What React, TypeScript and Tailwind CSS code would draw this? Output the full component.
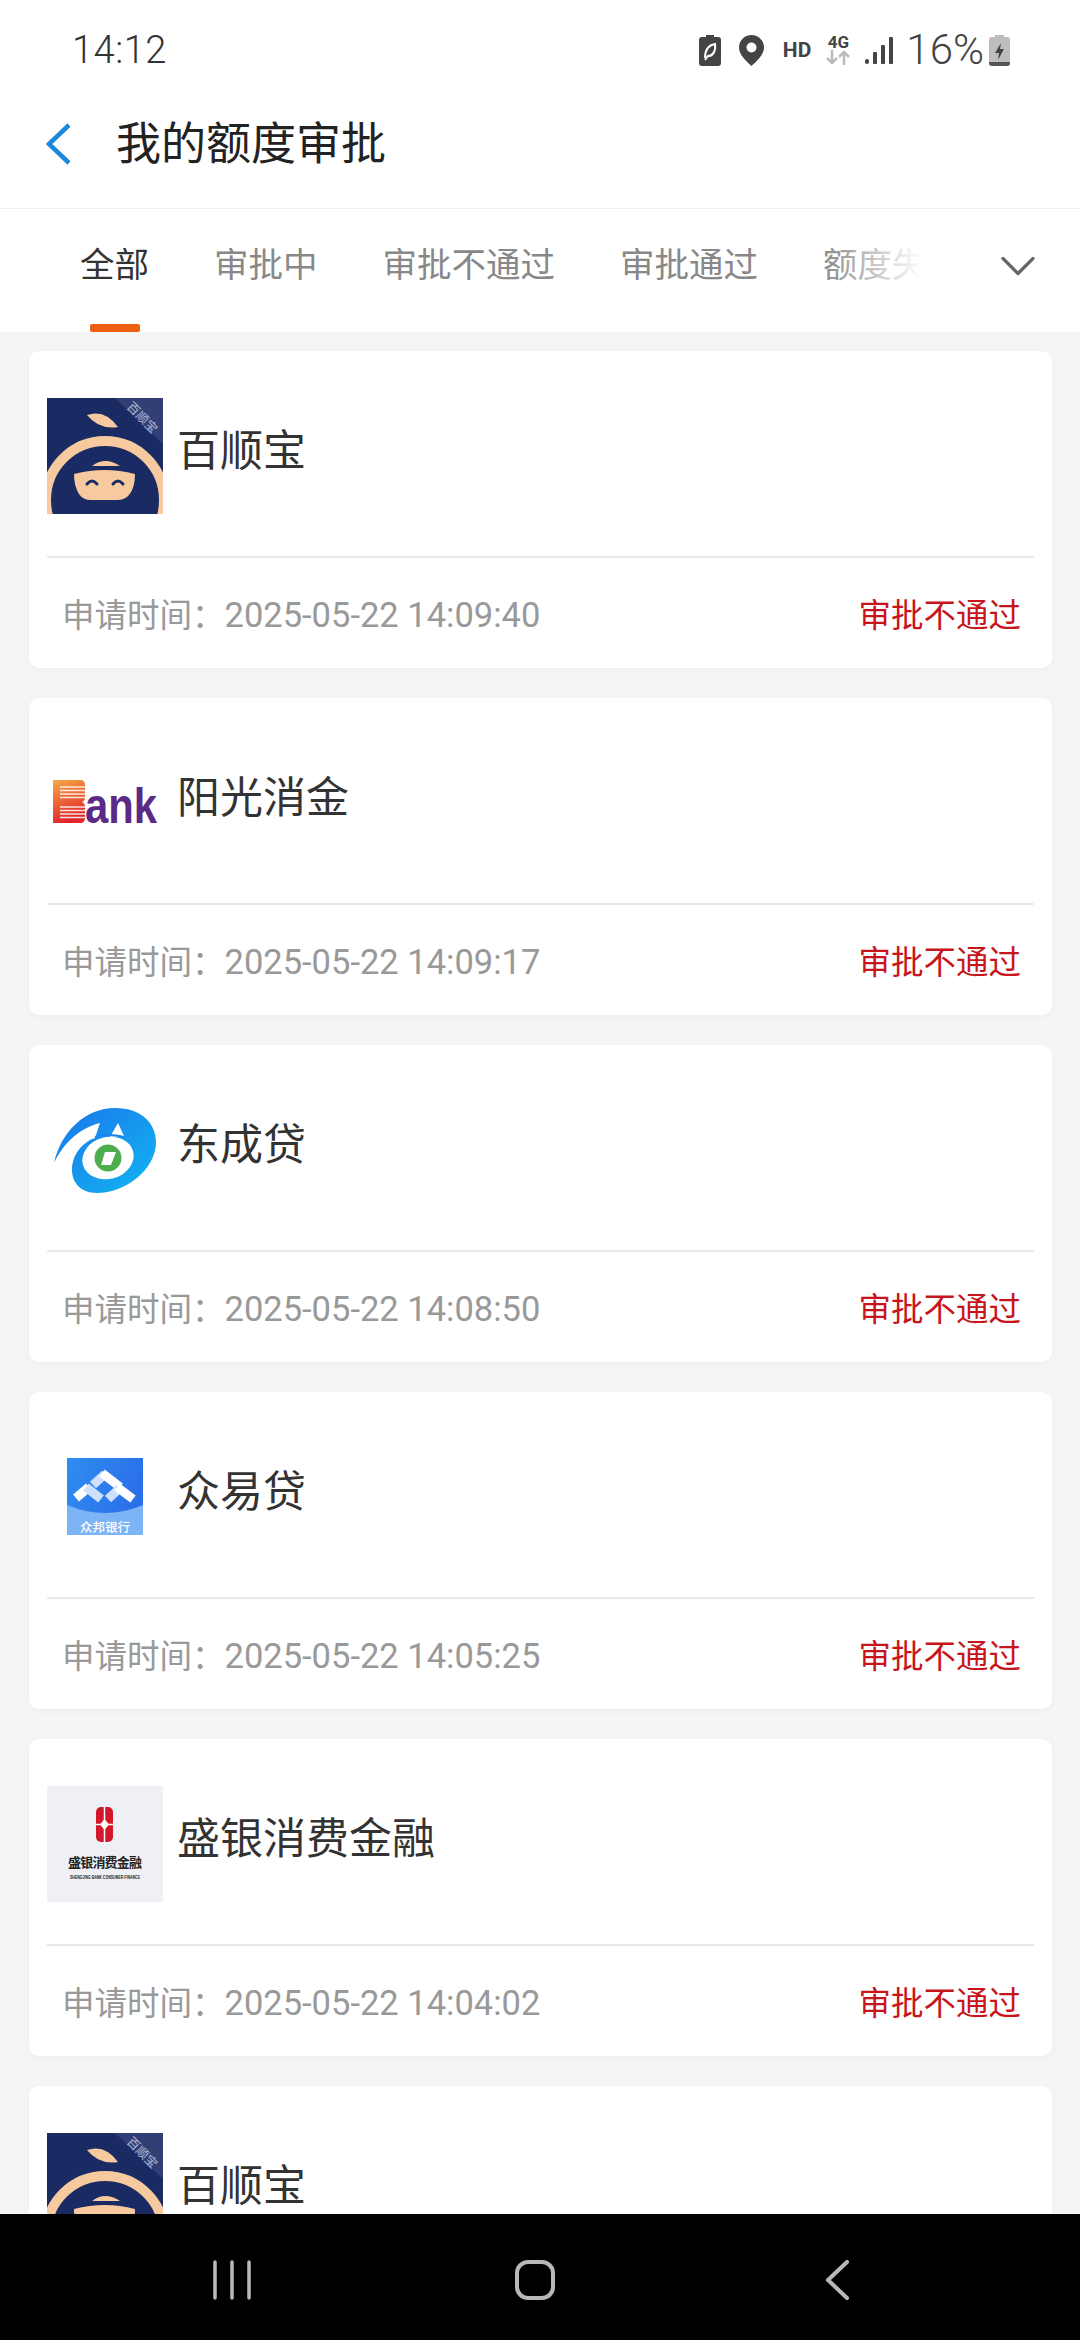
import { ChevronDown } from "lucide-react";
import type { ReactNode } from "react";

// app logos, all drawn on a 116x116 box
function BaishunLogo() {
  return (
    <svg viewBox="0 0 116 116" className="w-full h-full">
      <rect width="116" height="116" fill="#1a2a63" />
      <path d="M68 0H116V46Z" fill="#323f74" />
      <text x="95" y="24" fontSize="12.500" fill="#aeb7d4" textAnchor="middle" transform="rotate(45 95 20)" fontFamily="'Noto Sans CJK SC', sans-serif">百顺宝</text>
      <path d="M40 17Q58 11 71 29Q52 32 40 17Z" fill="#f6c99e" />
      <circle cx="58" cy="102" r="59" fill="none" stroke="#f6c99e" strokeWidth="10" />
      <path d="M45 68Q58 58 73 68Z" fill="#f6c99e" />
      <path d="M27 76Q58 68 88 76Q88 90 82 97Q78 102 70 102H44Q36 102 32 96Q27 88 27 76Z" fill="#f6c99e" />
      <path d="M40 86Q45 80 50 86M66 86Q71 80 76 86" fill="none" stroke="#1a2a63" strokeWidth="3" strokeLinecap="round" />
    </svg>
  );
}

function BankLogo() {
  return (
    <svg viewBox="0 0 116 116" className="w-full h-full">
      <defs>
        <linearGradient id="bankGrad" x1="0" y1="0" x2="0.3" y2="1">
          <stop offset="0" stopColor="#f6ab45" />
          <stop offset="1" stopColor="#e0262a" />
        </linearGradient>
      </defs>
      <path d="M6 35H33Q38 35 38 40V52Q38 56 35 57Q38 58 38 62V73Q38 78 33 78H6Z" fill="url(#bankGrad)" />
      <path d="M13 42H38M13 45.500H38M13 49H38M13 52.500H38M13 62H38M13 65.500H38M13 69H38M13 72.500H38" stroke="#fff" strokeWidth="1.400" opacity="0.85" />
      <text x="38" y="78" fontSize="50" fontWeight="700" fill="#5b2a86" textLength="72" lengthAdjust="spacingAndGlyphs" fontFamily="'Liberation Sans', sans-serif">ank</text>
    </svg>
  );
}

function DongchengLogo() {
  return (
    <svg viewBox="0 0 116 116" className="w-full h-full">
      <defs>
        <linearGradient id="dcGrad" x1="0" y1="0" x2="1" y2="1">
          <stop offset="0" stopColor="#1a76ea" />
          <stop offset="1" stopColor="#12b6f2" />
        </linearGradient>
      </defs>
      <path d="M7 71C14 40 38 16 68 16C95 16 109 32 109 50C109 78 78 101 50 101C33 101 25 90 25 78C25 62 36 50 48 46L53 31C32 36 16 52 7 71Z" fill="url(#dcGrad)" />
      <ellipse cx="61" cy="66" rx="26" ry="21" transform="rotate(-15 61 66)" fill="#fff" />
      <path d="M71 31L63 45L77 44Z" fill="#fff" />
      <path d="M48 45Q62 41 77 45" fill="none" stroke="#1a86ee" strokeWidth="2" />
      <circle cx="61" cy="66" r="13.500" fill="#4cae4c" />
      <path d="M58 60H69L64 73H54Z" fill="#fff" />
    </svg>
  );
}

function ZhongbangLogo() {
  return (
    <svg viewBox="0 0 116 116" className="w-full h-full">
      <defs>
        <linearGradient id="zbGrad" x1="0" y1="0" x2="1" y2="0.4">
          <stop offset="0" stopColor="#2f8df0" />
          <stop offset="1" stopColor="#2a6fe8" />
        </linearGradient>
      </defs>
      <rect x="20" y="19" width="76" height="77" fill="url(#zbGrad)" />
      <path d="M20 66Q58 82 96 66V96H20Z" fill="#7db4f6" />
      <path d="M46 46L58 35" stroke="#cfe0fb" strokeWidth="9" fill="none" />
      <path d="M55 34L73 48" stroke="#fff" strokeWidth="9" fill="none" />
      <path d="M29 59L42 48" stroke="#fff" strokeWidth="9" fill="none" />
      <path d="M39 48L54 60" stroke="#cfe0fb" strokeWidth="9" fill="none" />
      <path d="M61 60L73 49" stroke="#cfe0fb" strokeWidth="9" fill="none" />
      <path d="M70 48L86 60" stroke="#fff" strokeWidth="9" fill="none" />
      <text x="58" y="93" fontSize="12.500" fontWeight="500" fill="#fff" textAnchor="middle" fontFamily="'Noto Sans CJK SC', sans-serif">众邦银行</text>
    </svg>
  );
}

function ShengyinLogo() {
  return (
    <svg viewBox="0 0 116 116" className="w-full h-full">
      <rect width="116" height="116" fill="#eef0f5" />
      <rect x="49" y="21" width="17" height="35" rx="5" fill="#d2172a" />
      <path d="M57.500 21V56M49 38.500H66" stroke="#fff" strokeWidth="1.500" />
      <path d="M57.500 33L62 38.500L57.500 44L53 38.500Z" fill="#fff" />
      <text x="58" y="81" fontSize="13" fontWeight="700" fill="#222" textAnchor="middle" textLength="74" fontFamily="'Noto Sans CJK SC', sans-serif">盛银消费金融</text>
      <text x="58" y="93" fontSize="4.500" fontWeight="700" fill="#222" textAnchor="middle" textLength="70" lengthAdjust="spacingAndGlyphs" fontFamily="'Liberation Sans', sans-serif">SHENGJING BANK CONSUMER FINANCE</text>
    </svg>
  );
}

type Application = { name: string; time: string; logo: ReactNode };

const applications: Application[] = [
  { name: "百顺宝", time: "2025-05-22 14:09:40", logo: <BaishunLogo /> },
  { name: "阳光消金", time: "2025-05-22 14:09:17", logo: <BankLogo /> },
  { name: "东成贷", time: "2025-05-22 14:08:50", logo: <DongchengLogo /> },
  { name: "众易贷", time: "2025-05-22 14:05:25", logo: <ZhongbangLogo /> },
  { name: "盛银消费金融", time: "2025-05-22 14:04:02", logo: <ShengyinLogo /> },
  { name: "百顺宝", time: "2025-05-22 14:01:36", logo: <BaishunLogo /> },
];

const tabs = ["全部", "审批中", "审批不通过", "审批通过", "额度失效"];

function StatusBar() {
  return (
    <div className="h-[100px] shrink-0 flex items-center pl-[72px] pr-[70px] text-[#444]">
      <span className="text-[38px] font-light tracking-[0.5px] text-[#333]">14:12</span>
      <div className="ml-auto flex items-center">
        {/* eco battery */}
        <svg width="22" height="31" viewBox="0 0 22 31">
          <path d="M7 0H15V2H19Q22 2 22 5V28Q22 31 19 31H3Q0 31 0 28V5Q0 2 3 2H7Z" fill="#444" />
          <path d="M6 23C6 14 10 10 16 9C17 16 14 21 9 21L6 25" fill="none" stroke="#fff" strokeWidth="2" />
        </svg>
        {/* location pin */}
        <svg width="25" height="31" viewBox="0 0 25 31" className="ml-[18px]">
          <path fillRule="evenodd" d="M12.500 0C19.500 0 25 5.500 25 12.500C25 20 17 27 12.500 31C8 27 0 20 0 12.500C0 5.500 5.500 0 12.500 0ZM12.500 7.500A5 5 0 1 0 12.500 17.500A5 5 0 1 0 12.500 7.500Z" fill="#444" />
        </svg>
        <span className="ml-[19px] text-[21px] leading-none font-bold">HD</span>
        <div className="ml-[15px] w-[24px] flex flex-col items-center">
          <span className="text-[17px] leading-[15px] font-bold">4G</span>
          <svg width="24" height="15" viewBox="0 0 24 15" fill="none" stroke="#bbb" strokeWidth="2.500">
            <path d="M6 0V13M1 8L6 13L11 8M18 15V2M13 7L18 2L23 7" />
          </svg>
        </div>
        <svg width="28" height="27" viewBox="0 0 28 27" fill="#444" className="ml-[15px]">
          <rect x="0" y="22" width="4" height="5" rx="2" />
          <rect x="8" y="15" width="4" height="12" rx="1" />
          <rect x="16" y="8" width="4" height="19" rx="1" />
          <rect x="24" y="0" width="4" height="27" rx="1" />
        </svg>
        <span className="ml-[13px] text-[42px] leading-none font-light">16%</span>
        {/* charging battery */}
        <svg width="21" height="31" viewBox="0 0 21 31" className="ml-[5px]">
          <path d="M6 0H15V2H18Q21 2 21 5V28Q21 31 18 31H3Q0 31 0 28V5Q0 2 3 2H6Z" fill="#bdbdbd" />
          <path d="M0 27H21V28Q21 31 18 31H3Q0 31 0 28Z" fill="#555" />
          <path d="M12 8L6 18H10L9 25L15 14H11Z" fill="#444" />
        </svg>
      </div>
    </div>
  );
}

function Header() {
  return (
    <div className="h-[109px] shrink-0 flex items-center pb-[20px] bg-white border-b-[1px] border-[#eeeeee]">
      <svg width="28" height="42" viewBox="0 0 28 42" fill="none" stroke="#1b88d8" strokeWidth="4.500" className="ml-[44px] shrink-0">
        <path d="M25 2L5 21L25 40" />
      </svg>
      <span className="ml-[44px] text-[45px] leading-none text-[#222]">我的额度审批</span>
    </div>
  );
}

function Tabs() {
  return (
    <div className="relative h-[123px] shrink-0 flex bg-white">
      <div className="relative w-[922px] overflow-hidden flex items-start gap-[65px] pl-[80px] pt-[39px] whitespace-nowrap">
        {tabs.map((tab, i) => (
          <span key={tab} className={`shrink-0 text-[34.500px] leading-none ${i === 0 ? "text-[#333]" : "text-[#888]"}`}>
            {tab}
          </span>
        ))}
        <div className="absolute right-0 top-0 bottom-0 w-[100px] bg-gradient-to-r from-white/0 to-white" />
      </div>
      <div className="flex-1 flex justify-center pt-[27px] pl-[34px]">
        <ChevronDown className="w-[60px] h-[60px] text-[#666]" strokeWidth={1.3} />
      </div>
      <div className="absolute left-[90px] bottom-0 w-[50px] h-[8px] rounded-[2px] bg-[#ee5f0f]" />
    </div>
  );
}

function ApplicationCard({ item }: { item: Application }) {
  return (
    <div className="h-[317px] shrink-0 flex flex-col rounded-[10px] bg-white px-[18px] shadow-[0_2px_8px_rgba(0,0,0,0.03)]">
      <div className="h-[207px] shrink-0 flex items-start pt-[47px] border-b-2 border-[#e9e9e9]">
        <div className="w-[116px] h-[116px] shrink-0">{item.logo}</div>
        <span className="ml-[14px] mt-[32px] text-[43px] leading-none text-[#333]">{item.name}</span>
      </div>
      <div className="flex-1 flex items-baseline justify-between pl-[15px] pr-[13px] pt-[40px] text-[32.500px] leading-none">
        <span className="text-[#999]">
          申请时间：<span className="text-[34.500px]">{item.time}</span>
        </span>
        <span className="text-[#c8151b]">审批不通过</span>
      </div>
    </div>
  );
}

function NavBar() {
  return (
    <div className="h-[126px] shrink-0 bg-black flex items-center justify-center gap-[263px] pr-[10px] pt-[6px]">
      <svg width="40" height="40" viewBox="0 0 40 40" stroke="#b8b8b8" strokeWidth="3.500" strokeLinecap="round">
        <path d="M3 2V38M20 2V38M37 2V38" />
      </svg>
      <svg width="40" height="40" viewBox="0 0 40 40" fill="none" stroke="#b8b8b8" strokeWidth="4">
        <rect x="2" y="2" width="36" height="36" rx="11" />
      </svg>
      <svg width="40" height="40" viewBox="0 0 40 40" fill="none" stroke="#b8b8b8" strokeWidth="4" strokeLinecap="round" strokeLinejoin="round">
        <path d="M29 2L10 20L29 38" />
      </svg>
    </div>
  );
}

export default function App() {
  return (
    <div className="w-[1080px] h-[2340px] overflow-hidden flex flex-col bg-white font-[Roboto,'Noto_Sans_CJK_SC',sans-serif]">
      <StatusBar />
      <Header />
      <Tabs />
      <div className="flex-1 min-h-0 overflow-hidden flex flex-col gap-[30px] bg-[#f5f5f5] pl-[29px] pr-[28px] pt-[19px]">
        {applications.map((item) => (
          <ApplicationCard key={item.time} item={item} />
        ))}
      </div>
      <NavBar />
    </div>
  );
}
